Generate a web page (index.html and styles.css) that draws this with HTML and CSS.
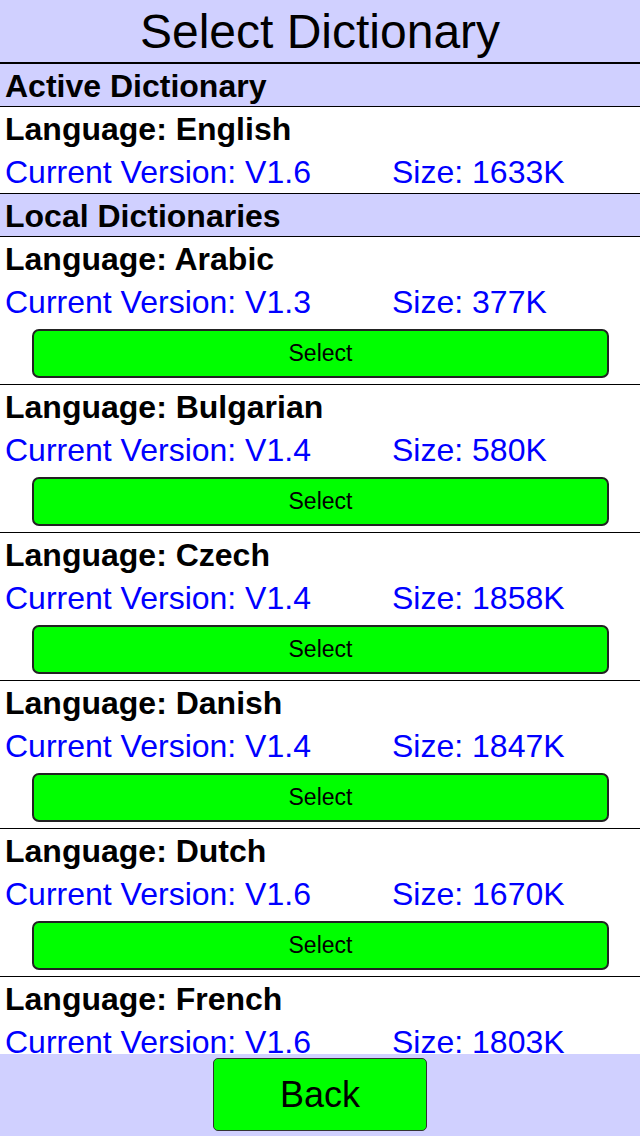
FILE: index.html
```html
<!DOCTYPE html>
<html lang="en">
<head>
    <meta charset="UTF-8">
    <meta name="viewport" content="width=device-width, initial-scale=1.0">
    <title>Select Dictionary</title>
    <link rel="stylesheet" href="styles.css">
</head>
<body>
    <div class="screen">
        <div class="title">Select Dictionary</div>

        <div class="list">
            <div class="section-head">Active Dictionary</div>
            <div class="entry">
                <div class="lang">Language: English</div>
                <div class="info"><span class="version">Current Version: V1.6</span><span>Size: 1633K</span></div>
            </div>

            <div class="section-head">Local Dictionaries</div>
            <div class="entry">
                <div class="lang">Language: Arabic</div>
                <div class="info"><span class="version">Current Version: V1.3</span><span>Size: 377K</span></div>
                <button class="select-btn">Select</button>
            </div>
            <div class="entry">
                <div class="lang">Language: Bulgarian</div>
                <div class="info"><span class="version">Current Version: V1.4</span><span>Size: 580K</span></div>
                <button class="select-btn">Select</button>
            </div>
            <div class="entry">
                <div class="lang">Language: Czech</div>
                <div class="info"><span class="version">Current Version: V1.4</span><span>Size: 1858K</span></div>
                <button class="select-btn">Select</button>
            </div>
            <div class="entry">
                <div class="lang">Language: Danish</div>
                <div class="info"><span class="version">Current Version: V1.4</span><span>Size: 1847K</span></div>
                <button class="select-btn">Select</button>
            </div>
            <div class="entry">
                <div class="lang">Language: Dutch</div>
                <div class="info"><span class="version">Current Version: V1.6</span><span>Size: 1670K</span></div>
                <button class="select-btn">Select</button>
            </div>
            <div class="entry">
                <div class="lang">Language: French</div>
                <div class="info"><span class="version">Current Version: V1.6</span><span>Size: 1803K</span></div>
                <button class="select-btn">Select</button>
            </div>
        </div>

        <div class="footer">
            <button class="back-btn">Back</button>
        </div>
    </div>
</body>
</html>
```

FILE: styles.css
```css
body {
    margin: 0;
    padding: 0;
    font-family: "Liberation Sans", Arial, sans-serif;
    background-color: #fff;
}
.screen {
    width: 640px;
    height: 1136px;
    display: flex;
    flex-direction: column;
    overflow: hidden;
}
.title {
    height: 62px;
    line-height: 64px;
    text-align: center;
    font-size: 48px;
    background-color: #d0d0ff;
    border-bottom: 2px solid #000;
    flex-shrink: 0;
}
.list {
    flex: 1;
    overflow: hidden;
}
.section-head {
    height: 42px;
    line-height: 44px;
    padding-left: 5px;
    font-size: 32px;
    font-weight: bold;
    background-color: #d0d0ff;
    border-bottom: 1px solid #000;
}
.entry {
    border-bottom: 1px solid #000;
}
.lang {
    height: 43px;
    line-height: 45px;
    padding-left: 5px;
    font-size: 32px;
    font-weight: bold;
}
.info {
    display: flex;
    height: 43px;
    line-height: 45px;
    padding-left: 5px;
    font-size: 32px;
    color: #0000ff;
}
.info .version {
    width: 387px;
}
.select-btn {
    display: block;
    width: 577px;
    height: 49px;
    margin: 6px 0 6px 32px;
    padding: 0;
    font-family: "Liberation Sans", Arial, sans-serif;
    font-size: 23px;
    color: #000;
    background-color: #00ff00;
    border: 2px solid #222;
    border-radius: 7px;
}
.footer {
    height: 82px;
    flex-shrink: 0;
    background-color: #d0d0ff;
    display: flex;
    justify-content: center;
    align-items: flex-start;
}
.back-btn {
    width: 214px;
    height: 73px;
    margin-top: 4px;
    padding: 0;
    font-family: "Liberation Sans", Arial, sans-serif;
    font-size: 36px;
    color: #000;
    background-color: #00ff00;
    border: 1px solid #333;
    border-radius: 5px;
}
```
